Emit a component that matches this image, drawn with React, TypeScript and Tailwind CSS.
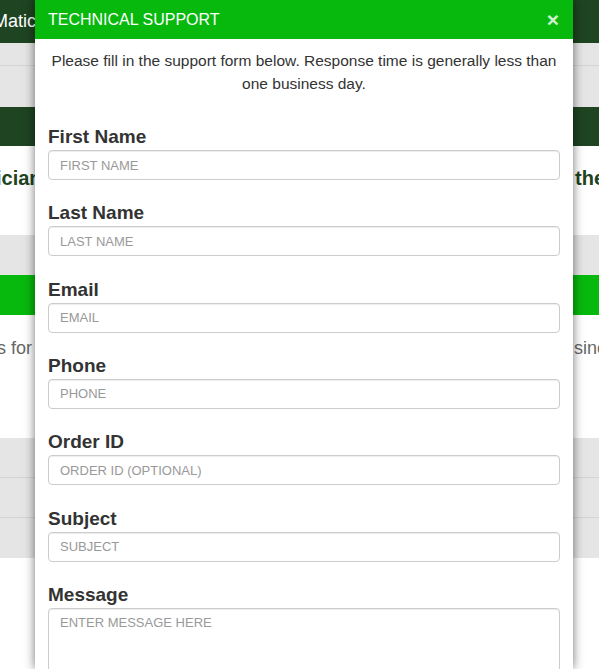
const fields = [
  { label: "First Name", placeholder: "FIRST NAME" },
  { label: "Last Name", placeholder: "LAST NAME" },
  { label: "Email", placeholder: "EMAIL" },
  { label: "Phone", placeholder: "PHONE" },
  { label: "Order ID", placeholder: "ORDER ID (OPTIONAL)" },
  { label: "Subject", placeholder: "SUBJECT" },
];

function BackgroundPage() {
  return (
    <div className="flex flex-col overflow-hidden">
      {/* Top bar */}
      <div className="flex h-[43px] items-center bg-[#1e4421] text-[18px] text-white">
        <span className="-ml-[7px] whitespace-nowrap">Matic</span>
      </div>
      <div className="h-[23px] border-b border-[#d4d4d4] bg-[#e5e5e5]" />
      <div className="h-[41px] bg-[#e5e5e5]" />
      <div className="h-[39px] bg-[#1e4421]" />

      {/* Intro heading */}
      <div className="flex h-[89px] items-start justify-between whitespace-nowrap pt-[21px] text-[20px] font-bold leading-[22px] text-[#1e4421]">
        <span className="-ml-[4px]">ician</span>
        <span className="-mr-[6px]">the</span>
      </div>

      <div className="h-[40px] bg-[#e5e5e5]" />
      <div className="h-[40px] bg-[#06b90c]" />

      <div className="flex h-[123px] items-start justify-between whitespace-nowrap pt-[20px] text-[18px] text-[#666]">
        <span className="-ml-[3px]">s for</span>
        <span className="-mr-[8px]">sine</span>
      </div>

      <div className="h-[40px] border-b border-[#d4d4d4] bg-[#e5e5e5]" />
      <div className="h-[40px] border-b border-[#d4d4d4] bg-[#e5e5e5]" />
      <div className="h-[40px] bg-[#e5e5e5]" />
      <div className="h-[111px] bg-white" />
    </div>
  );
}

function SupportModal() {
  return (
    <div className="absolute left-[35px] top-0 h-[669px] w-[538px] overflow-hidden bg-white shadow-[0_0_10px_rgba(0,0,0,0.55)]">
      {/* Header */}
      <div className="flex h-[39px] items-center justify-between bg-[#06b90c] pl-[13px] pr-[14px] text-white">
        <h2 className="text-[16px] leading-none">TECHNICAL SUPPORT</h2>
        <button className="text-[21px] font-bold leading-none text-white/80">×</button>
      </div>

      <div className="px-[13px]">
        <p className="pt-[10px] text-center text-[15.5px] leading-[23px] text-[#333]">
          Please fill in the support form below. Response time is generally less than one business day.
        </p>

        <form className="mt-[31px] flex flex-col">
          {fields.map((f) => (
            <div key={f.label} className="mb-[22.33px] flex flex-col">
              <label className="mb-[2px] text-[19px] font-bold leading-[22px] text-[#333]">{f.label}</label>
              <input
                type="text"
                placeholder={f.placeholder}
                className="h-[30px] rounded-[4px] border border-[#ccc] px-[11px] text-[13px] text-[#555] shadow-[inset_0_1px_1px_rgba(0,0,0,0.075)] outline-none placeholder:text-[#999]"
              />
            </div>
          ))}
          <div className="flex flex-col">
            <label className="mb-[2px] text-[19px] font-bold leading-[22px] text-[#333]">Message</label>
            <textarea
              placeholder="ENTER MESSAGE HERE"
              className="h-[100px] resize-none rounded-[4px] border border-[#ccc] px-[11px] py-[4px] text-[13px] text-[#555] shadow-[inset_0_1px_1px_rgba(0,0,0,0.075)] outline-none placeholder:text-[#999]"
            />
          </div>
        </form>
      </div>
    </div>
  );
}

export default function App() {
  return (
    <div className="relative h-[669px] w-full overflow-hidden bg-white font-['Liberation_Sans',Arial,sans-serif]">
      <BackgroundPage />
      <SupportModal />
    </div>
  );
}
